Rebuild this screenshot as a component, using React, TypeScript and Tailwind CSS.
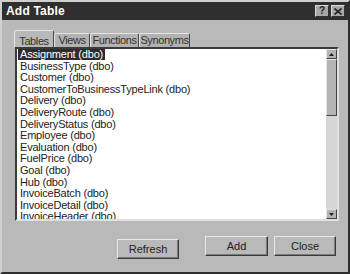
import React from 'react';

const tables = [
  'Assignment (dbo)',
  'BusinessType (dbo)',
  'Customer (dbo)',
  'CustomerToBusinessTypeLink (dbo)',
  'Delivery (dbo)',
  'DeliveryRoute (dbo)',
  'DeliveryStatus (dbo)',
  'Employee (dbo)',
  'Evaluation (dbo)',
  'FuelPrice (dbo)',
  'Goal (dbo)',
  'Hub (dbo)',
  'InvoiceBatch (dbo)',
  'InvoiceDetail (dbo)',
  'InvoiceHeader (dbo)',
];

const tabs = [
  { label: 'Tables', w: 'w-[40px]' },
  { label: 'Views', w: 'w-[36px]' },
  { label: 'Functions', w: 'w-[49px]' },
  { label: 'Synonyms', w: 'w-[51px]' },
];

const Button: React.FC<{ label: string; w: string }> = ({ label, w }) => (
  <button
    className={`${w} h-[20px] bg-[#b9b9b9] text-[11px] text-[#222] border border-t-[#e8e8e8] border-l-[#e8e8e8] border-r-[#3a3a3a] border-b-[#3a3a3a] shadow-[inset_-1px_-1px_0_#7a7a7a]`}
  >
    {label}
  </button>
);

export default function App() {
  return (
    <div
      className="w-[350px] h-[274px] bg-[#b9b9b9] border-2 border-t-[#d0d0d0] border-l-[#d0d0d0] border-r-[#2e2e2e] border-b-[#2e2e2e] flex flex-col overflow-hidden"
      style={{ fontFamily: '"Liberation Sans", Arial, sans-serif' }}
    >
      {/* title bar */}
      <div className="h-[18px] bg-[#2f2f2f] flex items-center justify-between pl-[4px] pr-[3px] shrink-0">
        <span className="text-white font-bold text-[12px] tracking-[0.2px]">Add Table</span>
        <div className="flex gap-[2px]">
          <div className="w-[14px] h-[12px] bg-[#a8a8a8] border border-t-[#dcdcdc] border-l-[#dcdcdc] border-r-[#333] border-b-[#333] flex items-center justify-center text-[10px] font-bold leading-none text-[#222]">
            ?
          </div>
          <div className="w-[14px] h-[12px] bg-[#a8a8a8] border border-t-[#dcdcdc] border-l-[#dcdcdc] border-r-[#333] border-b-[#333] flex items-center justify-center">
            <svg width="8" height="7" viewBox="0 0 8 7">
              <path d="M0.5 0.5 L7.5 6.5 M7.5 0.5 L0.5 6.5" stroke="#222" strokeWidth="1.6" />
            </svg>
          </div>
        </div>
      </div>

      {/* tabs */}
      <div className="pl-[12px] pt-[9px] flex items-end h-[27px] shrink-0">
        {tabs.map((t, i) => (
          <div
            key={t.label}
            className={`${t.w} text-center text-[11px] tracking-[-0.4px] text-[#333] border border-b-0 border-t-[#e6e6e6] border-l-[#e6e6e6] border-r-[#444] rounded-t-[2px] ${
              i === 0 ? 'h-[17px] pt-[2px] bg-[#b9b9b9]' : 'h-[14px] leading-[13px] bg-[#b2b2b2]'
            }`}
          >
            {t.label}
          </div>
        ))}
      </div>

      {/* list */}
      <div className="ml-[13px] mr-[9px] h-[174px] bg-white border-2 border-t-[#3a3a3a] border-l-[#3a3a3a] border-r-[#e0e0e0] border-b-[#e0e0e0] flex overflow-hidden shrink-0">
        <div className="flex-1 pl-[1px] overflow-hidden">
          {tables.map((t, i) => (
            <div key={t} className="h-[11.6px] leading-[11.6px] text-[11px] tracking-[-0.2px] text-[#222] whitespace-nowrap">
              <span className={`px-[2px] ${i === 0 ? 'bg-[#2c2c2c] text-white' : ''}`}>{t}</span>
            </div>
          ))}
        </div>
        <div className="w-[11px] bg-[#d6d6d6] flex flex-col">
          <div className="h-[10px] bg-[#b4b4b4] border border-t-[#e6e6e6] border-l-[#e6e6e6] border-r-[#444] border-b-[#444] flex items-center justify-center">
            <svg width="5" height="3" viewBox="0 0 5 3">
              <path d="M2.5 0 L5 3 L0 3 Z" fill="#222" />
            </svg>
          </div>
          <div className="h-[57px] bg-[#b4b4b4] border border-t-[#e6e6e6] border-l-[#e6e6e6] border-r-[#444] border-b-[#444]" />
          <div className="flex-1" />
          <div className="h-[10px] bg-[#b4b4b4] border border-t-[#e6e6e6] border-l-[#e6e6e6] border-r-[#444] border-b-[#444] flex items-center justify-center">
            <svg width="5" height="3" viewBox="0 0 5 3">
              <path d="M0 0 L5 0 L2.5 3 Z" fill="#222" />
            </svg>
          </div>
        </div>
      </div>

      {/* buttons */}
      <div className="flex justify-end gap-[6px] pr-[12px] pt-[15px]">
        <div className="mr-[20px]">
          <Button label="Refresh" w="w-[62px]" />
        </div>
        <Button label="Add" w="w-[63px]" />
        <Button label="Close" w="w-[62px]" />
      </div>
    </div>
  );
}
